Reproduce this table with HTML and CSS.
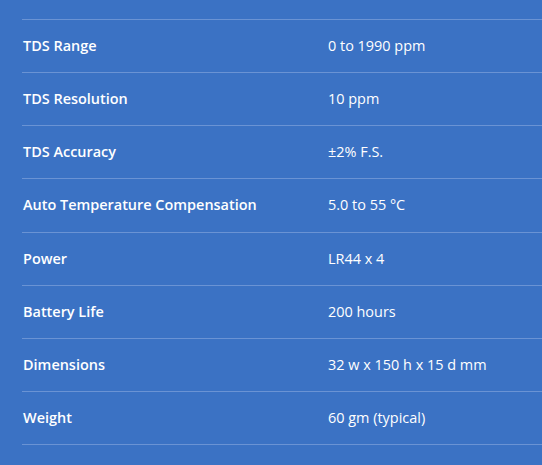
FILE: index.html
```html
<!DOCTYPE html>
<html>
<head>
<meta charset="utf-8">
<link rel="stylesheet" href="styles.css">
</head>
<body>
<div class="specs">
  <div class="row"><div class="label">TDS Range</div><div class="value">0 to 1990 ppm</div></div>
  <div class="row"><div class="label">TDS Resolution</div><div class="value">10 ppm</div></div>
  <div class="row"><div class="label">TDS Accuracy</div><div class="value">±2% F.S.</div></div>
  <div class="row"><div class="label">Auto Temperature Compensation</div><div class="value">5.0 to 55 °C</div></div>
  <div class="row"><div class="label">Power</div><div class="value">LR44 x 4</div></div>
  <div class="row"><div class="label">Battery Life</div><div class="value">200 hours</div></div>
  <div class="row"><div class="label">Dimensions</div><div class="value">32 w x 150 h x 15 d mm</div></div>
  <div class="row last"><div class="label">Weight</div><div class="value">60 gm (typical)</div></div>
</div>
</body>
</html>
```
FILE: styles.css
```css
html, body {
  margin: 0;
  padding: 0;
  background: #3b72c4;
  height: 100%;
  overflow: hidden;
}
body {
  font-family: "Open Sans", "Noto Sans", sans-serif;
  font-size: 14.45px;
  color: #ffffff;
}
.specs {
  padding-top: 19px;
  padding-left: 22px;
}
.row {
  display: grid;
  grid-template-columns: 306px 1fr;
  align-items: center;
  height: 53.125px;
  box-sizing: border-box;
  border-top: 1px solid #6a93d4;
  padding-bottom: 1px;
}
.row.last {
  height: 54.125px;
  border-bottom: 1px solid #6a93d4;
}
.label {
  font-weight: 600;
  padding-left: 1px;
}
.value {
  font-weight: 400;
}
```
